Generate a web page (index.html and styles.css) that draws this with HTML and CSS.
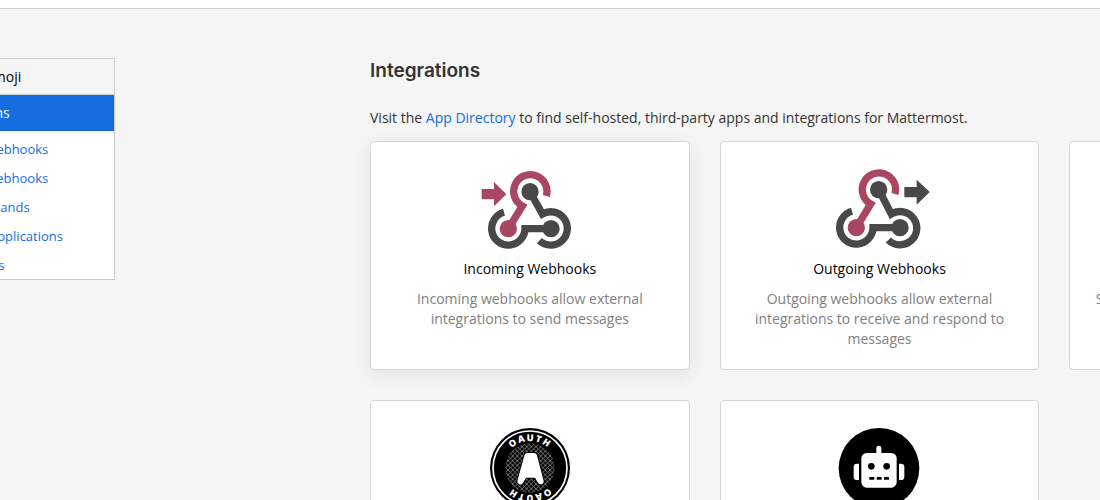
FILE: index.html
```
<!DOCTYPE html>
<html lang="en">
<head>
    <meta charset="UTF-8">
    <meta name="viewport" content="width=device-width, initial-scale=1.0">
    <title>Integrations</title>
    <link rel="stylesheet" href="styles.css">
</head>
<body>
    <header class="navbar"></header>

    <div class="backstage">
        <nav class="sidebar">
            <a class="category" href="#">Custom Emoji</a>
            <a class="category active" href="#">Integrations</a>
            <ul class="sections">
                <li><a href="#">Incoming Webhooks</a></li>
                <li><a href="#">Outgoing Webhooks</a></li>
                <li><a href="#">Slash Commands</a></li>
                <li><a href="#">OAuth 2.0 Applications</a></li>
                <li><a href="#">Bot Accounts</a></li>
            </ul>
        </nav>

        <main class="content">
            <h1>Integrations</h1>
            <p class="intro">Visit the <a href="#">App Directory</a> to find self-hosted, third-party apps and integrations for Mattermost.</p>

            <div class="options">
                <a class="option raised" href="#">
                    <svg class="option-image" viewBox="30 27 300 240" aria-hidden="true">
                        <g fill="none" stroke="#484848" stroke-width="22">
                            <path d="M102 157A50 50 0 1 0 165 206H243"/>
                            <path d="M180 95L217 162A50 50 0 1 1 208 242"/>
                            <path d="M229 108A50 50 0 1 0 157 138L115 206" stroke="#a94763"/>
                        </g>
                        <circle cx="180" cy="95" r="26" fill="#484848"/>
                        <circle cx="243" cy="206" r="26" fill="#484848"/>
                        <circle cx="115" cy="206" r="26" fill="#a94763"/>
                        <path d="M35 87H72V66L109 103L72 139V118H35Z" fill="#a94763"/>
                    </svg>
                    <span class="option-title">Incoming Webhooks</span>
                    <span class="option-description">Incoming webhooks allow external integrations to send messages</span>
                </a>
                <a class="option" href="#">
                    <svg class="option-image" viewBox="28 28 300 240" aria-hidden="true">
                        <g fill="none" stroke="#484848" stroke-width="22">
                            <path d="M97 155A50 50 0 1 0 160 204H243"/>
                            <path d="M177 90L215 163A50 50 0 1 1 206 241"/>
                            <path d="M226 103A50 50 0 1 0 153 133L110 204" stroke="#a94763"/>
                        </g>
                        <circle cx="177" cy="90" r="26" fill="#484848"/>
                        <circle cx="241" cy="204" r="26" fill="#484848"/>
                        <circle cx="110" cy="204" r="26" fill="#a94763"/>
                        <path d="M254 82H291V60L330 97L291 135V113H254Z" fill="#484848"/>
                    </svg>
                    <span class="option-title">Outgoing Webhooks</span>
                    <span class="option-description">Outgoing webhooks allow external integrations to receive and respond to messages</span>
                </a>
                <a class="option" href="#">
                    <svg class="option-image" viewBox="0 0 100 80" aria-hidden="true">
                        <path d="M60 10L40 70" stroke="#484848" stroke-width="8"/>
                    </svg>
                    <span class="option-title">Slash Commands</span>
                    <span class="option-description">Slash commands send events to external integrations</span>
                </a>
                <a class="option" href="#">
                    <svg class="option-image" viewBox="0 0 300 240" aria-hidden="true">
                        <defs>
                            <pattern id="mesh" width="14" height="14" patternUnits="userSpaceOnUse">
                                <path d="M0 0L14 14M14 0L0 14" stroke="#aaa" stroke-width="2"/>
                            </pattern>
                            <path id="arc-top" d="M69 120A81 81 0 0 1 231 120"/>
                            <path id="arc-bottom" d="M231 120A81 81 0 0 1 69 120"/>
                        </defs>
                        <circle cx="150" cy="120" r="120"/>
                        <circle cx="150" cy="120" r="111" fill="none" stroke="#fff" stroke-width="5"/>
                        <circle cx="150" cy="120" r="74" fill="url(#mesh)"/>
                        <path d="M142 84H162L182 160L170 140H133L121 160Z" fill="#000" stroke="#000" stroke-width="24" stroke-linejoin="round"/>
                        <path d="M142 84H162L182 160L170 140H133L121 160Z" fill="#fff" stroke="#fff" stroke-width="18" stroke-linejoin="round"/>
                        <g class="badge-text">
                            <text><textPath href="#arc-top" startOffset="50%">OAUTH</textPath></text>
                            <text><textPath href="#arc-bottom" startOffset="50%">OAUTH</textPath></text>
                        </g>
                    </svg>
                    <span class="option-title">OAuth 2.0 Applications</span>
                    <span class="option-description">Authentication for external integrations</span>
                </a>
                <a class="option" href="#">
                    <svg class="option-image" viewBox="0 0 300 240" aria-hidden="true">
                        <circle cx="150" cy="121" r="121"/>
                        <g fill="#fff">
                            <rect x="142" y="53" width="15" height="30" rx="7"/>
                            <rect x="97" y="75" width="106" height="104" rx="16"/>
                            <path d="M90 107V156H84Q74 156 74 146V117Q74 107 84 107Z"/>
                            <path d="M210 107V156H216Q226 156 226 146V117Q226 107 216 107Z"/>
                        </g>
                        <circle cx="127" cy="115" r="10"/>
                        <circle cx="173" cy="115" r="10"/>
                        <path d="M121 151H136M143 151H158M165 151H180" stroke="#000" stroke-width="8"/>
                    </svg>
                    <span class="option-title">Bot Accounts</span>
                    <span class="option-description">Use bot accounts to integrate with plugins or APIs</span>
                </a>
            </div>
        </main>
    </div>
</body>
</html>
```
FILE: styles.css
```
* {
    box-sizing: border-box;
}

body {
    margin: 0;
    background: #f5f5f5;
    color: #333;
    font-family: "Open Sans", sans-serif;
    font-size: 14px;
    line-height: 20px;
    overflow: hidden;
}

a {
    color: #166de0;
    text-decoration: none;
}

.navbar {
    height: 9px;
    background: #fff;
    border-bottom: 1px solid #d0d0d0;
}

/* the backstage is wider than the window on both sides */
.backstage {
    display: flex;
    align-items: flex-start;
    margin: 0 -289px 0 -105px;
    padding-top: 49px;
}

.sidebar {
    flex: 0 0 220px;
    border: 1px solid #ccc;
}

.category {
    display: block;
    height: 36px;
    padding: 8px 35px;
    border-bottom: 1px solid #ccc;
    color: #000;
}

.category.active {
    background: #166de0;
    border-bottom-color: #145fc4;
    color: #fff;
}

.sections {
    margin: 3px 0 0;
    padding: 0;
    background: #fff;
    list-style: none;
}

.sections a {
    display: block;
    height: 29px;
    padding: 5px 29px;
    font-size: 13px;
}

.content {
    flex: 1;
    margin-left: 255px;
}

h1 {
    margin: 0 0 24px;
    font-family: Inter, sans-serif;
    font-size: 19px;
    font-weight: 600;
    line-height: 26px;
}

.intro {
    margin: 0 0 13px;
}

.options {
    display: grid;
    grid-template-columns: repeat(3, 1fr);
    gap: 30px;
}

.option {
    display: flex;
    flex-direction: column;
    align-items: center;
    min-height: 229px;
    padding: 27px 25px 20px;
    background: #fff;
    border: 1px solid #d5d5d5;
    border-radius: 4px;
    text-align: center;
}

.option.raised {
    box-shadow: 0 5px 20px rgba(0, 0, 0, 0.08);
}

.option-image {
    width: 100px;
    height: 80px;
    flex-shrink: 0;
    overflow: visible;
}

.option-title {
    margin: 10px 0;
    color: #000;
}

.option-description {
    color: #808080;
}

.badge-text {
    fill: #fff;
    font-size: 28px;
    font-weight: 800;
    letter-spacing: 4px;
    text-anchor: middle;
}
```
